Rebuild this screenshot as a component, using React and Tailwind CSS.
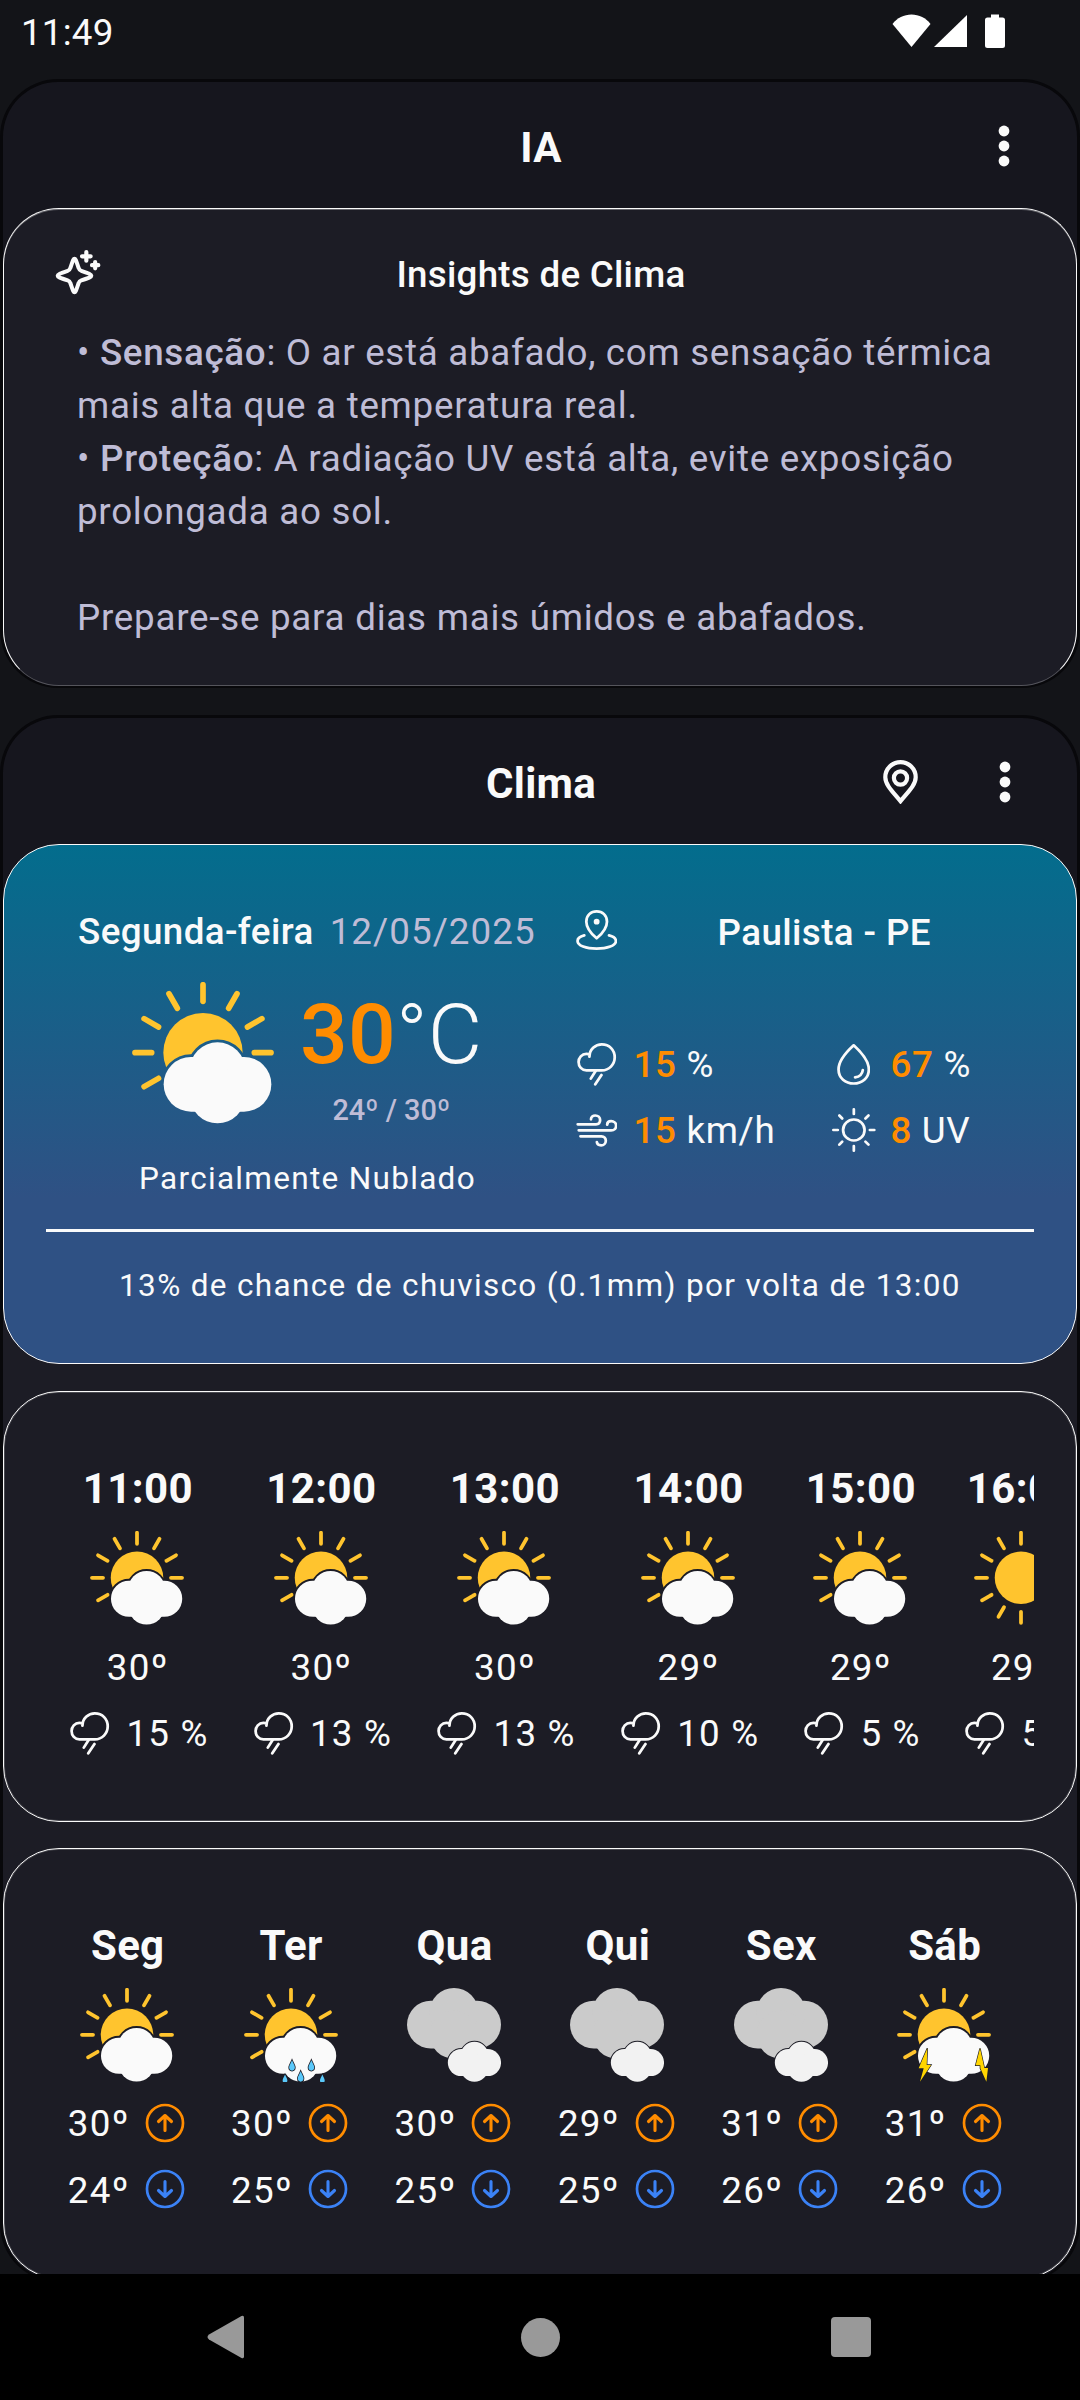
import React from "react";

const Dots = () => (
  <svg width="12" height="42" viewBox="0 0 12 42" fill="#fafafa">
    <circle cx="6" cy="6" r="5.4" />
    <circle cx="6" cy="21" r="5.4" />
    <circle cx="6" cy="36" r="5.4" />
  </svg>
);

const PinIcon = () => (
  <svg width="35" height="44" viewBox="0 0 35 44" fill="none" stroke="#fafafa" strokeWidth="4.2">
    <path d="M17.5 41.2C10 32 2.3 25 2.3 17.2A15.2 15.1 0 0 1 32.7 17.2C32.7 25 25 32 17.5 41.2Z" />
    <circle cx="17.5" cy="18" r="6.6" />
  </svg>
);

const Sparkles = () => (
  <svg width="46" height="46" viewBox="165 147 138 138" fill="none" stroke="#fafafa" strokeLinecap="round" strokeLinejoin="round">
    <path
      strokeWidth="12"
      d="M223.500 176C220 176 219 181 211 204C209.500 209 208 211 203 212.500C180 220 173 223 173 227C173 231 180 234 203 241C208 242.500 209.500 244 211 249C219 272 220 277 223.500 277C227 277 228 272 236 249C237.500 244 239 242.500 244 241C267 234 274 231 274 227C274 223 267 220 244 212.500C239 211 237.500 209 236 204C228 181 227 176 223.500 176Z"
    />
    <path strokeWidth="12.500" d="M259 156V182M246 169H272" />
    <path strokeWidth="12.500" d="M285.500 186V205M276 195.500H295" />
  </svg>
);

const MapPinArea = () => (
  <svg width="41.300" height="40" preserveAspectRatio="none" viewBox="104 90 120 120" fill="none" stroke="#fafafa" strokeWidth="8" strokeLinecap="round" strokeLinejoin="round">
    <path d="M164 175C148 161 134 143 134 125C134 106 147 94 164 94C181 94 194 106 194 125C194 143 180 161 164 175Z" />
    <path d="M128 166C116 169 108.500 175 108.500 183C108.500 197 133 206 164 206S220 197 220 183C220 175 212 169 200 166" />
    <circle cx="164" cy="125" r="8.500" fill="#fafafa" stroke="none" />
  </svg>
);

const RainIcon = () => (
  <svg className="shrink-0" width="41.300" height="44" preserveAspectRatio="none" viewBox="104 484 120 132" fill="none" stroke="#fafafa" strokeWidth="8" strokeLinecap="round" strokeLinejoin="round">
    <path d="M143 528C143 506 160 491 179 491C201 491 216.500 508 216.500 530C216.500 552 200 569 179 569H134C121 569 111.500 558 111.500 544C111.500 531 121 519.500 134 519.500C138 519.500 141 520 144 522" />
    <path d="M161 571L147 594M178 583L160 611" />
  </svg>
);

const DropIcon = () => (
  <svg width="33.400" height="41" preserveAspectRatio="none" viewBox="861.500 483 97 124" fill="none" stroke="#fafafa" strokeWidth="8" strokeLinecap="round" strokeLinejoin="round">
    <path d="M910 487C889 507 866 533 866 560C866 586 886 602.500 910 602.500C934 602.500 954 586 954 560C954 533 931 507 910 487Z" />
    <path d="M936.500 562C935 574 927 582 914 584" />
  </svg>
);

const WindIcon = () => (
  <svg width="41.700" height="33" preserveAspectRatio="none" viewBox="104 698 121 99" fill="none" stroke="#fafafa" strokeWidth="8" strokeLinecap="round" strokeLinejoin="round">
    <path d="M109 729H162C170 729 174 723 174 716C174 708 168 702.500 160 702.500C153 702.500 147.500 707 147.500 714" />
    <path d="M112 747H206C215 747 220.500 741 220.500 733C220.500 725 214 719.500 206 719.500C199 719.500 194.500 724 194.500 730" />
    <path d="M117 765H178C186 765 190.500 771 190.500 778C190.500 787 184 792 177 792C170 792 165 788 164.500 782" />
  </svg>
);

const UvIcon = () => (
  <svg width="44.400" height="44" preserveAspectRatio="none" viewBox="846 681 129 132" fill="none" stroke="#fafafa" strokeWidth="8" strokeLinecap="round">
    <circle cx="910" cy="747" r="31.500" />
    <path d="M910 685V699M910 795V809M850 747H863M957 747H970M867.500 703.500L876 712.500M944 782L953 791M953 703.500L944 712.500M876 782L867.500 791" />
  </svg>
);

const ArrowCircle = ({ up }) => (
  <svg width="40" height="40" viewBox="0 0 40 40" fill="none" stroke={up ? "#ff8c00" : "#3b82f6"} strokeWidth="2.700" strokeLinecap="round" strokeLinejoin="round">
    <circle cx="20" cy="20" r="18" />
    <path strokeWidth="3.100" d={up ? "M20 27.500V13M13.500 18.500L20 12.500L26.500 18.500" : "M20 12.500V27M13.500 21.500L20 27.500L26.500 21.500"} />
  </svg>
);

const CloudShape = () => (
  <>
    <rect x="0" y="44" width="323" height="164" rx="82" />
    <circle cx="161.500" cy="83.500" r="83.500" />
    <circle cx="161.500" cy="160" r="83" />
  </>
);

const RAYS = [-150, -120, -90, -60, -30, 0, 180, 150];
const ALL_RAYS = [0, 30, 60, 90, 120, 150, 180, 210, 240, 270, 300, 330];

const Rays = ({ angles }) => (
  <g stroke="#ffc42e" strokeWidth="17" strokeLinecap="round">
    {angles.map((a) => (
      <line key={a} x1="154" y1="0" x2="204" y2="0" transform={`translate(213 212) rotate(${a})`} />
    ))}
  </g>
);

const DROPS = [
  [144, 233, 1.15],
  [202, 233, 1.15],
  [123, 273, 0.95],
  [170, 266, 1.15],
  [235, 273, 0.95],
];

function WeatherIcon({ kind, size = 94 }) {
  if (kind === "sun")
    return (
      <svg className="shrink-0" width={size} height={size} viewBox="0 0 426 426">
        <Rays angles={ALL_RAYS} />
        <circle cx="213" cy="212" r="119" fill="#ffc42e" />
      </svg>
    );
  if (kind === "cloudy")
    return (
      <svg className="shrink-0" width={size} height={size} viewBox="0 0 282 282">
        <mask id="behind-small-cloud">
          <rect width="282" height="282" fill="#fff" />
          <g transform="translate(122.500 161.500) scale(.495)" fill="#000" stroke="#000" strokeWidth="12">
            <CloudShape />
          </g>
        </mask>
        <g mask="url(#behind-small-cloud)">
          <g transform="scale(.873)" fill="#cbcbcb">
            <CloudShape />
          </g>
        </g>
        <g transform="translate(122.500 161.500) scale(.494)" fill="#f2f2f2">
          <CloudShape />
        </g>
      </svg>
    );
  return (
    <svg className="shrink-0" width={size} height={size} viewBox="0 0 426 426">
      <mask id="behind-cloud">
        <rect width="426" height="426" fill="#fff" />
        <g transform="translate(95 181)" fill="#000" stroke="#000" strokeWidth="17">
          <CloudShape />
        </g>
      </mask>
      <Rays angles={RAYS} />
      <g mask="url(#behind-cloud)">
        <circle cx="213" cy="212" r="119" fill="#ffc42e" />
      </g>
      <g transform="translate(95 181)" fill="#fafafa">
        <CloudShape />
      </g>
      {kind === "showers" && (
        <g transform="scale(1.511)" fill="#5ac8fa" stroke="#1c1c25" strokeWidth="4" paintOrder="stroke">
          {DROPS.map(([x, y, s], i) => (
            <path key={i} transform={`translate(${x} ${y}) scale(${s})`} d="M0-14C-3-6-7.500-1-7.500 5C-7.500 10-4 13 0 13S7.500 10 7.500 5C7.500-1 3-6 0-14Z" />
          ))}
        </g>
      )}
      {kind === "storm" && (
        <g transform="scale(1.511)" fill="#ffd500" stroke="#1c1c25" strokeWidth="4" paintOrder="stroke">
          <path d="M91 181L65 241H80L69 281L102 231H89Z" />
          <path d="M249 181L236 232H250V241L268 281L273 240H262Z" />
        </g>
      )}
    </svg>
  );
}

const CARD = "shrink-0 rounded-[56px] border border-[#fafafa]";

const hours = [
  { time: "11:00", temp: "30º", rain: "15 %", kind: "partly", w: "w-[183.6px]" },
  { time: "12:00", temp: "30º", rain: "13 %", kind: "partly", w: "w-[183.6px]" },
  { time: "13:00", temp: "30º", rain: "13 %", kind: "partly", w: "w-[183.6px]" },
  { time: "14:00", temp: "29º", rain: "10 %", kind: "partly", w: "w-[183.6px]" },
  { time: "15:00", temp: "29º", rain: "5 %", kind: "partly", w: "w-[161px]" },
  { time: "16:00", temp: "29º", rain: "5 %", kind: "sun", w: "w-[161px]" },
];

const days = [
  { day: "Seg", max: "30º", min: "24º", kind: "partly" },
  { day: "Ter", max: "30º", min: "25º", kind: "showers" },
  { day: "Qua", max: "30º", min: "25º", kind: "cloudy" },
  { day: "Qui", max: "29º", min: "25º", kind: "cloudy" },
  { day: "Sex", max: "31º", min: "26º", kind: "cloudy" },
  { day: "Sáb", max: "31º", min: "26º", kind: "storm" },
];

const Stat = ({ icon, value, unit }) => (
  <div className="flex h-[66px] items-center">
    <div className="flex w-[44px] justify-center">{icon}</div>
    <div className="ml-[15px] whitespace-pre pt-[1px] tracking-[0.66px]">
      <span className="font-medium text-[#ff8c00]">{value}</span> {unit}
    </div>
  </div>
);

export default function App() {
  return (
    <div className="flex h-[2400px] w-[1080px] flex-col overflow-hidden bg-[#131418] font-['Roboto',sans-serif] text-[36.75px] text-[#fafafa]">
      <div className="flex h-[79px] shrink-0 items-center justify-between pb-3 pl-[21px] pr-[74px]">
        <span className="text-[36.75px] leading-none tracking-[0.2px]">11:49</span>
        <svg className="mt-[-5px]" width="114" height="34" viewBox="0 0 114 34" fill="#fff">
          <path d="M19.500 33L0.500 10C5 4 12 0.500 19.500 0.500S34 4 38.500 10Z" />
          <path d="M42 33L75 1V33Z" />
          <path d="M99 0.500h8v3h3.500a2.500 2.500 0 0 1 2.500 2.500v25.500a2.500 2.500 0 0 1-2.500 2.500h-15a2.500 2.500 0 0 1-2.500-2.500v-25.500a2.500 2.500 0 0 1 2.500-2.500h3.500z" />
        </svg>
      </div>

      <main className="flex h-[2195px] shrink-0 flex-col gap-[27px] overflow-hidden">
        <section className="h-[609px] shrink-0 rounded-[58px] border-[3px] border-b-2 border-[#08080b] bg-[#16161e]">
          <header className="grid h-[126px] grid-cols-3 items-center">
            <span />
            <h1 className="mt-[6px] pl-[2px] text-center text-[42px] font-bold leading-none tracking-[0.2px]">IA</h1>
            <div className="flex justify-end pr-[67px] pt-[2px]">
              <Dots />
            </div>
          </header>
          <div className={`${CARD} h-[478px] border-b-[#55555c] bg-[#1c1c25] shadow-[inset_0_1px_0_0_#66666c]`}>
            <div className="grid h-[117px] grid-cols-[200px_1fr_200px] items-center pt-[15px]">
              <div className="mt-[-7px] pl-[51px]">
                <Sparkles />
              </div>
              <h2 className="pl-[2px] text-center font-medium tracking-[0.26px]">Insights de Clima</h2>
            </div>
            <div className="whitespace-pre pl-[73px] leading-[53px] tracking-[0.72px] text-[#bfbcd6]">
              <p className="tracking-[0.69px]">• <b className="font-medium">Sensação</b>: O ar está abafado, com sensação térmica</p>
              <p>mais alta que a temperatura real.</p>
              <p>• <b className="font-medium">Proteção</b>: A radiação UV está alta, evite exposição</p>
              <p>prolongada ao sol.</p>
              <p className="mt-[53px] tracking-[0.75px]">Prepare-se para dias mais úmidos e abafados.</p>
            </div>
          </div>
        </section>

        <section className="flex h-[1567px] shrink-0 flex-col rounded-[58px] border-[3px] border-b-2 border-[#08080b] bg-[linear-gradient(#16161e_300px,#1c1c25_300px)]">
          <header className="grid h-[126px] shrink-0 grid-cols-3 items-center">
            <span />
            <h1 className="mt-[6px] pl-[2px] text-center text-[42px] font-bold leading-none tracking-[0.3px]">Clima</h1>
            <div className="flex items-center justify-end gap-[81px] pr-[66px] pt-[2px]">
              <PinIcon />
              <Dots />
            </div>
          </header>

          <div className={`${CARD} h-[520px] bg-[linear-gradient(#036d8d,#2f5184_68%)]`}>
            <div className="flex pt-[60px]">
              <div className="ml-[74px] w-[495px]">
                <div className="flex h-[54px] items-center">
                  <span className="font-medium tracking-[0.4px]">Segunda-feira</span>
                  <span className="ml-[16px] tracking-[1.05px] text-[#bfbcd6]">12/05/2025</span>
                </div>
                <div className="mt-[23px] flex h-[148px] pl-[54px]">
                  <WeatherIcon kind="partly" size={142} />
                  <div className="ml-[26px] mt-1 flex flex-col items-center">
                    <div className="text-[84px] leading-[98px] tracking-[0.2px]">
                      <span className="font-medium text-[#ff8c00]">30</span>
                      <span className="font-light">°C</span>
                    </div>
                    <div className="mt-[6px] text-[28.9px] font-medium leading-[40px] text-[#bfbcd6]">24º / 30º</div>
                  </div>
                </div>
                <div className="mt-[26px] pl-[61px] text-[31.5px] leading-[46px] tracking-[1.31px]">Parcialmente Nublado</div>
              </div>
              <div>
                <div className="flex h-[54px] items-center">
                  <div className="ml-[3px] mt-[-4px]">
                    <MapPinArea />
                  </div>
                  <span className="mt-[1px] w-[414px] text-center font-medium tracking-[0.4px]">Paulista - PE</span>
                </div>
                <div className="mt-[72px] grid grid-cols-[257px_auto] pl-[1.5px]">
                  <Stat icon={<RainIcon />} value="15" unit="%" />
                  <Stat icon={<DropIcon />} value="67" unit="%" />
                  <Stat icon={<WindIcon />} value="15" unit="km/h" />
                  <Stat icon={<UvIcon />} value="8" unit="UV" />
                </div>
              </div>
            </div>
            <div className="mx-[42px] mt-[27px] h-[3px] bg-[#fafafa]" />
            <p className="mt-[32px] text-center text-[31.5px] leading-[44px] tracking-[1.34px]">13% de chance de chuvisco (0.1mm) por volta de 13:00</p>
          </div>

          <div className={`${CARD} mt-[27px] h-[431px] px-[42px] pt-[69px] shadow-[inset_0_0_0_1px_#4a4a51]`}>
            <div className="flex overflow-hidden">
              {hours.map((h) => (
                <div key={h.time} className={`flex shrink-0 flex-col items-center ${h.w}`}>
                  <div className="text-[42px] font-bold leading-[56px] tracking-[0.4px]">{h.time}</div>
                  <div className="mt-[14px] pr-px">
                    <WeatherIcon kind={h.kind} />
                  </div>
                  <div className="mt-[17px] leading-[52px] tracking-[1.3px]">{h.temp}</div>
                  <div className="mt-[13px] flex h-[52px] items-center gap-[16px] pl-[2px] leading-[52px] tracking-[1.2px]">
                    <RainIcon />
                    <span className="pt-[2px]">{h.rain}</span>
                  </div>
                </div>
              ))}
            </div>
          </div>

          <div className={`${CARD} mt-[26px] h-[431px] px-[42px] pt-[69px] shadow-[inset_0_0_0_1px_#4a4a51]`}>
            <div className="flex">
              {days.map((d) => (
                <div key={d.day} className="flex w-[163.4px] shrink-0 flex-col items-center">
                  <div className="text-[42px] font-bold leading-[56px] tracking-[0.3px]">{d.day}</div>
                  <div className="mt-[14px] pr-px">
                    <WeatherIcon kind={d.kind} />
                  </div>
                  <div className="mt-[16px] flex h-[52px] items-center gap-[15px] pr-[3px] tracking-[1.3px]">
                    <span>{d.max}</span>
                    <div className="mt-[-3px]">
                      <ArrowCircle up />
                    </div>
                  </div>
                  <div className="mt-[14px] flex h-[52px] items-center gap-[15px] pr-[3px] tracking-[1.3px]">
                    <span className="pt-px">{d.min}</span>
                    <div className="mt-[-3px]">
                      <ArrowCircle />
                    </div>
                  </div>
                </div>
              ))}
            </div>
          </div>
        </section>
      </main>

      <nav className="flex h-[126px] shrink-0 items-center justify-between bg-black pl-[206px] pr-[209px]">
        <svg width="38" height="44" viewBox="0 0 38 44" fill="#999">
          <path d="M35.500 1Q38 0 38 2.500V41.500Q38 44 35.500 43L3 24.500Q0 22 3 19.500Z" />
        </svg>
        <div className="ml-[5px] size-[39px] rounded-full bg-[#999]" />
        <div className="size-[40px] rounded-[4px] bg-[#999]" />
      </nav>
    </div>
  );
}
